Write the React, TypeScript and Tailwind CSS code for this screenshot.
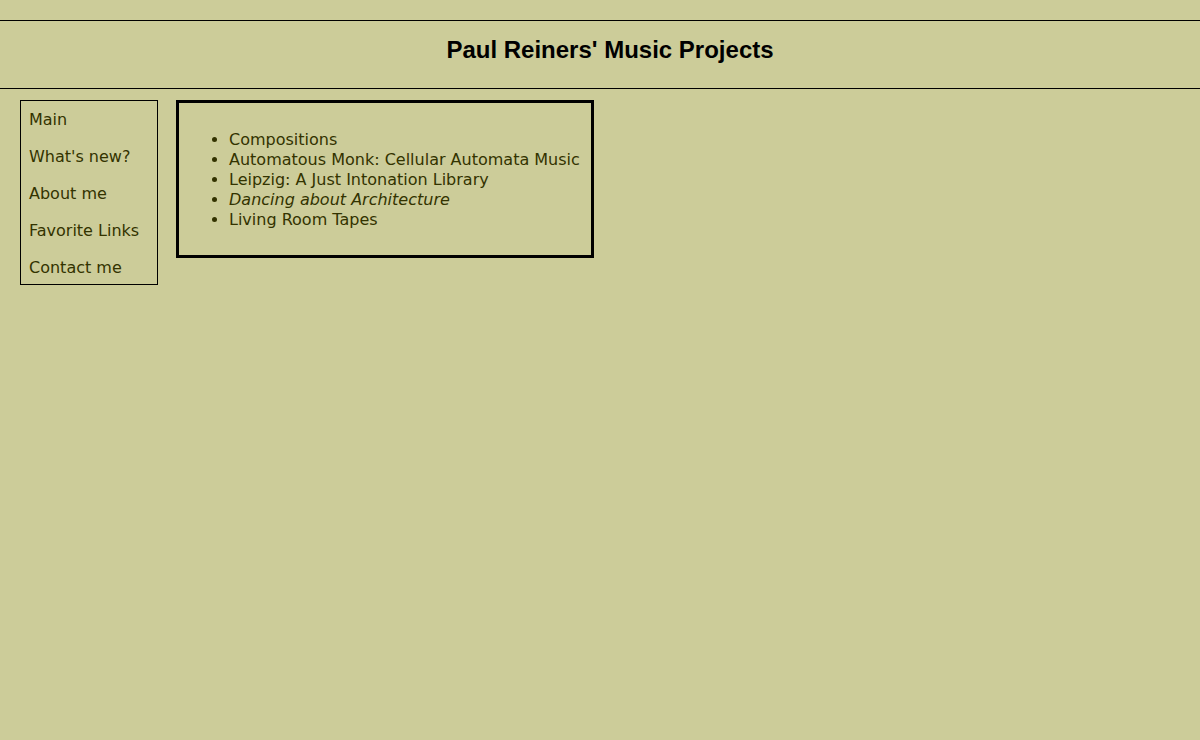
export default function App() {
  const nav = ['Main', "What's new?", 'About me', 'Favorite Links', 'Contact me'];

  return (
    <div className="min-h-[740px] bg-[#cccc99] pt-5 text-[#333300] font-['Verdana','DejaVu_Sans',sans-serif] text-[16px] leading-5">
      <div className="border-y border-black h-[69px] flex items-center justify-center pl-5 pb-[9px]">
        <h1 className="font-['Liberation_Sans',Arial,sans-serif] font-bold text-[24px] text-black">
          Paul Reiners' Music Projects
        </h1>
      </div>

      <div className="flex items-start gap-[18px] pl-5 pt-[11px]">
        <div className="w-[138px] border border-black pl-2 pt-[9px] pb-[6px] flex flex-col gap-[17px]">
          {nav.map((item) => (
            <a key={item} className="block">
              {item}
            </a>
          ))}
        </div>

        <div className="border-[3px] border-black pl-[10px] pr-[11px] pt-[11px] pb-[9px]">
          <ul className="list-disc pl-10 my-4">
            <li>Compositions</li>
            <li>Automatous Monk: Cellular Automata Music</li>
            <li>Leipzig: A Just Intonation Library</li>
            <li className="italic">Dancing about Architecture</li>
            <li>Living Room Tapes</li>
          </ul>
        </div>
      </div>
    </div>
  );
}
